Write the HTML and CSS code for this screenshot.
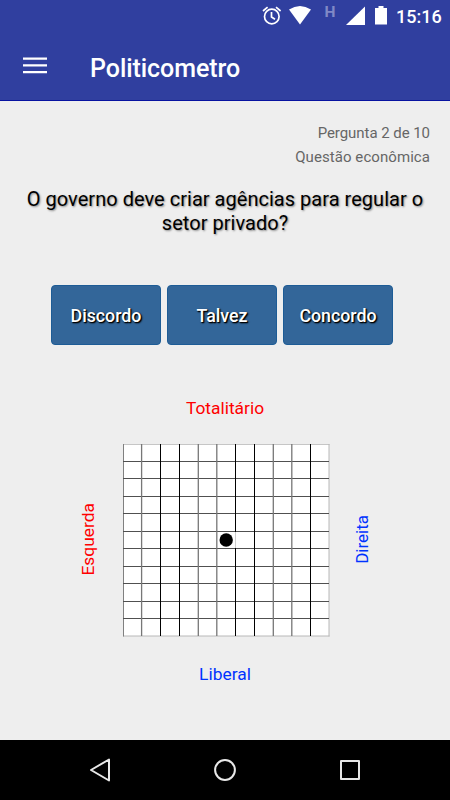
FILE: index.html
```
<!DOCTYPE html>
<html lang="pt-BR">

<head>
    <meta charset="UTF-8">
    <meta name="viewport" content="width=device-width, initial-scale=1.0">
    <title>Politicometro</title>
    <link rel="stylesheet" href="styles.css">
</head>

<body>
    <header>
        <div class="status">
            <svg width="134" height="32" viewBox="258 0 134 32" fill="#fff">
                <g fill="none" stroke="#fff" stroke-width="1.7">
                    <circle cx="271.8" cy="16.5" r="7.3" />
                    <path d="M271.5 12v5l3.5 2.2M263 11l4.6-3.8M280.6 11L276 7.2" />
                </g>
                <path d="M289 9.5Q300 2.5 311 9.5L300 24.5z" />
                <path d="M365 6.5V25H346z" />
                <path d="M378.5 6h5v2h3.5v16.5h-12V8h3.5z" />
                <text class="network" x="324.5" y="17">H</text>
            </svg>
            <span class="clock">15:16</span>
        </div>
        <div class="toolbar">
            <svg class="menu" width="24" height="17" viewBox="0 0 24 17" fill="#fff">
                <path d="M0 .5h24v2.3H0zM0 7.2h24v2.3H0zM0 14h24v2.3H0z" />
            </svg>
            <h1>Politicometro</h1>
        </div>
    </header>

    <main>
        <div class="progress">
            <p>Pergunta 2 de 10</p>
            <p class="theme">Questão econômica</p>
        </div>

        <h2>O governo deve criar agências para regular o<br>setor privado?</h2>

        <div class="answers">
            <button>Discordo</button>
            <button>Talvez</button>
            <button>Concordo</button>
        </div>

        <div class="chart">
            <span class="top red">Totalitário</span>
            <span class="left red">Esquerda</span>
            <svg class="board" width="207" height="193" viewBox="0 0 207 193">
                <path fill="#fff" d="M0 0h206v192H0z" />
                <path stroke="#b8b8b8" d="M0 .3h206.5M0 192h206.5M206 0v192.5" />
                <path stroke="#808080" d="M.5 0v192.5" />
                <path stroke="#505050" d="M0 17.5h206M0 34.5h206M0 52.5h206M0 69.5h206M0 87.5h206M0 104.5h206M0 122.5h206M0 139.5h206M0 157.5h206M0 174.5h206" />
                <path stroke="#777" stroke-width="1.3" d="M18.6 0v192M75.3 0v192M93.8 0v192M150.3 0v192M168.8 0v192" />
                <path stroke="#000" d="M37.5 0v192M56.5 0v192M112.5 0v192M131.5 0v192M187.5 0v192" />
                <path fill="#fff" d="M95 88.5h18V104H95z" />
                <path stroke="#ccc" d="M112.5 88v16" />
                <circle cx="103.2" cy="96" r="6.7" />
            </svg>
            <span class="right blue">Direita</span>
            <span class="bottom blue">Liberal</span>
        </div>
    </main>

    <footer>
        <svg width="450" height="60" viewBox="0 0 450 60" fill="none" stroke="#e8e8e8" stroke-width="2" stroke-linejoin="round">
            <path d="M109 19.5v21L91 30z" />
            <circle cx="225" cy="30" r="9.9" />
            <path d="M341 21h18v18h-18z" />
        </svg>
    </footer>
</body>

</html>
```
FILE: styles.css
```
body {
    font-family: Roboto, sans-serif;
    display: flex;
    flex-direction: column;
    margin: 0;
    height: 800px;
    background-color: #eeeeee;
}

h1,
h2,
p {
    margin: 0;
    font-weight: 500;
}

header {
    box-sizing: border-box;
    height: 101px;
    color: #fff;
    background-color: #303f9f;
    border-bottom: 1px solid #0712a0;
}

.status {
    display: flex;
    height: 32px;
    padding-left: 258px;
}

.network {
    font-size: 15.5px;
    font-weight: 700;
    fill: #8089c6;
}

.clock {
    margin-left: 4px;
    font-size: 18px;
    font-weight: 500;
    line-height: 33px;
}

.toolbar {
    display: flex;
    height: 68px;
    padding-left: 23px;
}

.menu {
    margin-top: 25px;
}

h1 {
    margin-left: 43px;
    font-size: 25px;
    line-height: 73px;
    letter-spacing: -0.05px;
}

main {
    height: 639px;
}

.progress {
    padding: 20px 20px 0 0;
    color: #666;
    text-align: right;
    font-size: 15px;
    line-height: 24px;
}

.progress p {
    font-weight: 400;
    letter-spacing: -0.05px;
}

.progress .theme {
    letter-spacing: 0.07px;
}

h2 {
    margin-top: 18px;
    text-align: center;
    font-size: 20px;
    line-height: 24px;
    font-weight: 400;
    letter-spacing: 0.03px;
    text-shadow: 1px 1px 2px #888;
}

.answers {
    display: flex;
    gap: 6px;
    margin: 50px 0 0 51px;
}

button {
    width: 110px;
    height: 60px;
    padding: 0;
    color: #fff;
    background-color: #336699;
    border: 1px solid #1d5c96;
    border-radius: 4px;
    font-family: inherit;
    font-size: 17.8px;
    font-weight: 500;
    text-shadow: 1px 1px 2px #000, 1px 1px 1px #000;
}

/* labels around the board, one on each side */
.chart {
    display: grid;
    grid-template-columns: 70px 207px 64px;
    grid-template-rows: 26px 193px 28px;
    gap: 23px 0;
    margin: 50px 0 0 53px;
    justify-items: center;
    align-items: center;
    font-size: 17.4px;
}

.top,
.bottom {
    grid-column: 2;
    margin-right: 3px;
}

.left {
    grid-column: 1;
    margin-bottom: 3px;
}

.right {
    margin-bottom: 3px;
    font-size: 17px;
}

.left,
.right {
    writing-mode: vertical-rl;
    transform: rotate(180deg);
}

.red {
    color: #ff0000;
}

.blue {
    color: #0033ff;
}

footer {
    height: 60px;
    background-color: #000;
}
```
